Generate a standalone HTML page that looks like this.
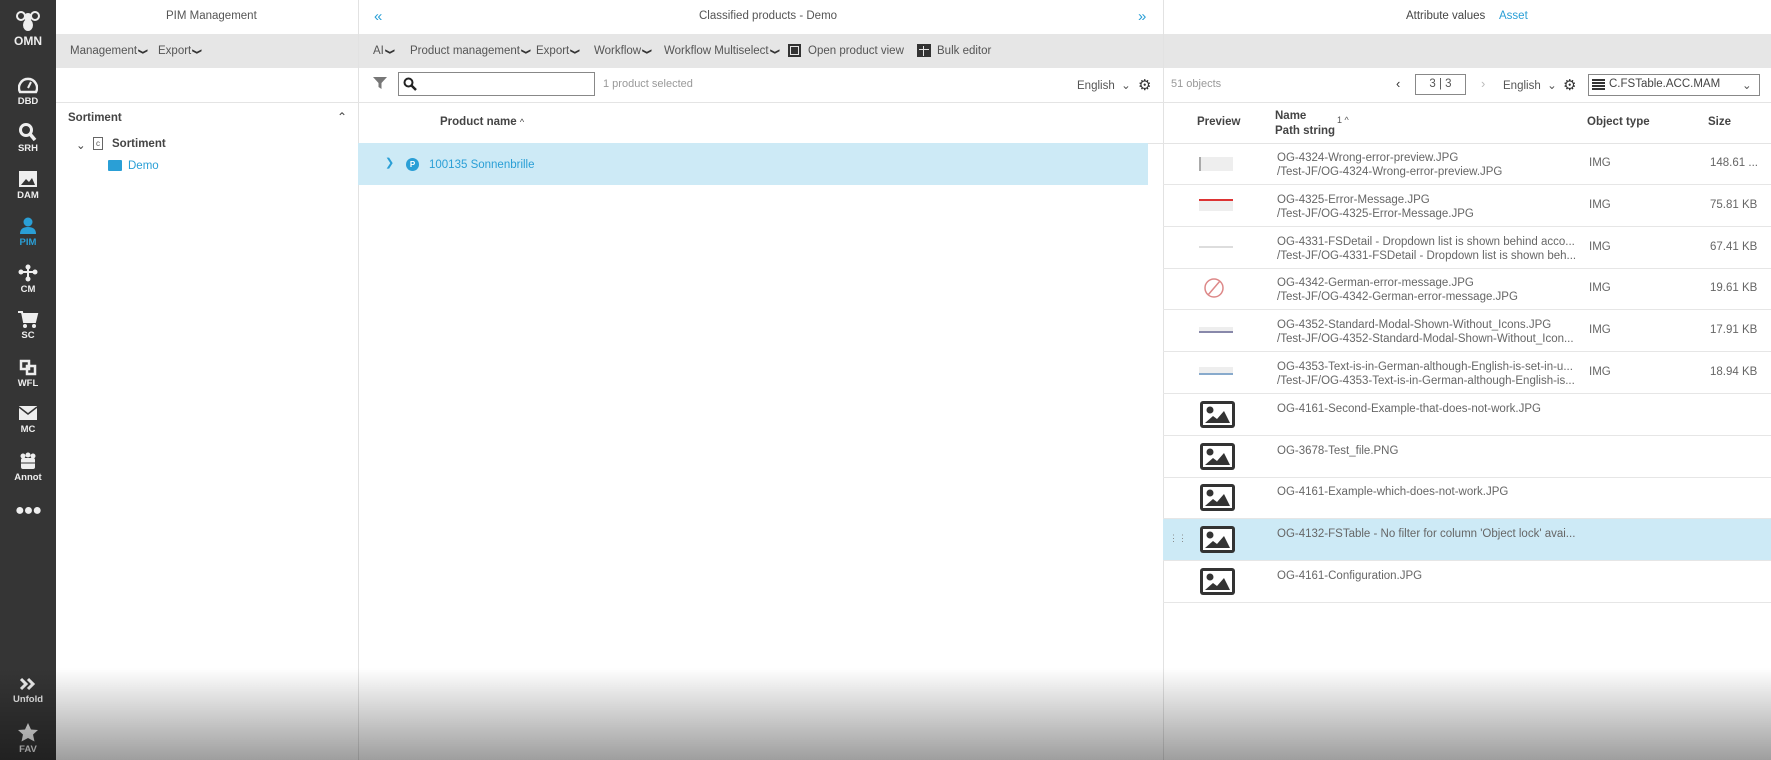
<!DOCTYPE html>
<html><head><meta charset="utf-8"><style>
*{margin:0;padding:0;box-sizing:border-box}
body{width:1771px;height:760px;overflow:hidden;position:relative;background:#fff;font-family:"Liberation Sans",sans-serif;font-size:11.5px;color:#555}
.a{position:absolute;white-space:nowrap}
#side{position:absolute;left:0;top:0;width:56px;height:760px;background:#353535}
.si{position:absolute;left:0;width:56px;text-align:center;color:#eee;font-size:9.5px;font-weight:bold}
.si svg{display:block;margin:0 auto 2px}
.bar{position:absolute;left:56px;top:34px;width:1715px;height:34px;background:#e6e6e6}
.vl{position:absolute;top:0;width:1px;height:760px;background:#e2e2e2}
.hl{position:absolute;height:1px;background:#e4e4e4}
.blue{color:#2a9fd6}
.b{font-weight:bold;color:#444}
.cv{display:inline-block;transform:rotate(90deg) scaleX(.8);font-size:9px;font-weight:bold;color:#333;margin-left:2px}
.row{position:absolute;left:1163px;width:608px;height:42px;border-bottom:1px solid #e6e6e6;color:#666}
.row .n{position:absolute;left:114px;top:8px;line-height:14px}
.row .t{position:absolute;left:426px;top:14px}
.row .s{position:absolute;left:547px;top:14px}
</style></head><body>
<div id="side">
 <div class="si" style="top:10px;font-size:12px"><svg width="26" height="22" viewBox="0 0 26 22"><circle cx="13" cy="7" r="4" fill="#eee"/><ellipse cx="13" cy="15" rx="5" ry="6" fill="#eee"/><circle cx="6" cy="6" r="4" fill="none" stroke="#eee" stroke-width="2"/><circle cx="20" cy="6" r="4" fill="none" stroke="#eee" stroke-width="2"/></svg>OMN</div>
 <div class="si" style="top:76px"><svg width="20" height="18" viewBox="0 0 20 18"><path d="M2 16A9 9 0 1 1 18 16Z" fill="none" stroke="#eee" stroke-width="2.4"/><path d="M10 12L13 6" stroke="#eee" stroke-width="2"/></svg>DBD</div>
 <div class="si" style="top:123px"><svg width="20" height="18" viewBox="0 0 20 18"><circle cx="8" cy="7" r="5.5" fill="none" stroke="#eee" stroke-width="3"/><path d="M12 11L17 17" stroke="#eee" stroke-width="3.5"/></svg>SRH</div>
 <div class="si" style="top:170px"><svg width="20" height="18" viewBox="0 0 20 18"><rect x="1" y="1" width="18" height="16" fill="#eee"/><path d="M3 15L8 9L11 12L14 8L17 15Z" fill="#353535"/></svg>DAM</div>
 <div class="si" style="top:217px;color:#2a9fd6"><svg width="20" height="18" viewBox="0 0 20 18"><circle cx="10" cy="5" r="4.5" fill="#2a9fd6"/><path d="M2 17Q2 10 10 10Q18 10 18 17Z" fill="#2a9fd6"/></svg>PIM</div>
 <div class="si" style="top:264px"><svg width="20" height="18" viewBox="0 0 20 18"><circle cx="10" cy="3" r="2.5" fill="#eee"/><circle cx="3" cy="8" r="2.5" fill="#eee"/><circle cx="17" cy="8" r="2.5" fill="#eee"/><circle cx="10" cy="15" r="2.5" fill="#eee"/><path d="M10 3V15M3 8H17" stroke="#eee" stroke-width="2"/></svg>CM</div>
 <div class="si" style="top:310px"><svg width="22" height="18" viewBox="0 0 22 18"><path d="M1 2H5L7 12H18L20 4H6" fill="#eee" stroke="#eee" stroke-width="2"/><circle cx="8" cy="16" r="2" fill="#eee"/><circle cx="17" cy="16" r="2" fill="#eee"/></svg>SC</div>
 <div class="si" style="top:358px"><svg width="20" height="18" viewBox="0 0 20 18"><rect x="3" y="3" width="8" height="8" fill="none" stroke="#eee" stroke-width="2.5"/><rect x="9" y="8" width="8" height="8" fill="none" stroke="#eee" stroke-width="2.5"/></svg>WFL</div>
 <div class="si" style="top:404px"><svg width="20" height="18" viewBox="0 0 20 18"><rect x="1" y="2" width="18" height="14" fill="#eee"/><path d="M1 3L10 10L19 3" fill="none" stroke="#353535" stroke-width="1.5"/></svg>MC</div>
 <div class="si" style="top:452px"><svg width="20" height="18" viewBox="0 0 20 18"><circle cx="5" cy="4" r="2.5" fill="#eee"/><circle cx="10" cy="3" r="2.5" fill="#eee"/><circle cx="15" cy="4" r="2.5" fill="#eee"/><rect x="3" y="6" width="14" height="11" rx="2" fill="#eee"/><path d="M3 11H17" stroke="#353535"/></svg>Annot</div>
 <div class="si" style="top:502px;font-size:16px;letter-spacing:-1px">●●●</div>
 <div class="si" style="top:676px"><svg width="20" height="16" viewBox="0 0 20 16"><path d="M3 3L8 8L3 13M10 3L15 8L10 13" fill="none" stroke="#eee" stroke-width="3"/></svg>Unfold</div>
 <div class="si" style="top:722px"><svg width="22" height="20" viewBox="0 0 22 20"><path d="M11 1L14 7.5L21 8L16 12.5L17.5 19.5L11 16L4.5 19.5L6 12.5L1 8L8 7.5Z" fill="#eee"/></svg>FAV</div>
</div>

<div class="bar"></div>
<div class="vl" style="left:358px"></div>
<div class="vl" style="left:1163px"></div>
<div class="hl" style="left:56px;top:102px;width:1715px"></div>
<div class="hl" style="left:358px;top:143px;width:1413px"></div>

<div class="a" style="left:166px;top:10px;color:#555">PIM Management</div>
<div class="a" style="left:70px;top:45px">Management<span class="cv">&#10095;</span></div>
<div class="a" style="left:158px;top:45px">Export<span class="cv">&#10095;</span></div>
<div class="a b" style="left:68px;top:112px">Sortiment</div>
<div class="a" style="left:337px;top:110px;font-size:12px;color:#444">&#8963;</div>
<div class="a" style="left:76px;top:138px;color:#444">&#8964;</div>
<div class="a" style="left:93px;top:137px;width:10px;height:13px;border:1px solid #666;font-size:8px;text-align:center;line-height:11px">c</div>
<div class="a b" style="left:112px;top:138px">Sortiment</div>
<div class="a" style="left:108px;top:160px;width:14px;height:11px;background:#2a9fd6;border-radius:1px"></div>
<div class="a blue" style="left:128px;top:160px">Demo</div>

<div class="a blue" style="left:374px;top:8px;font-size:15px">&laquo;</div>
<div class="a" style="left:699px;top:10px">Classified products - Demo</div>
<div class="a blue" style="left:1138px;top:8px;font-size:15px">&raquo;</div>
<div class="a" style="left:373px;top:45px">AI<span class="cv">&#10095;</span></div>
<div class="a" style="left:410px;top:45px">Product management<span class="cv">&#10095;</span></div>
<div class="a" style="left:536px;top:45px">Export<span class="cv">&#10095;</span></div>
<div class="a" style="left:594px;top:45px">Workflow<span class="cv">&#10095;</span></div>
<div class="a" style="left:664px;top:45px">Workflow Multiselect<span class="cv">&#10095;</span></div>
<div class="a" style="left:788px;top:44px;width:13px;height:13px;background:#333;border:2px solid #333;box-shadow:inset 0 0 0 1px #e6e6e6"></div>
<div class="a" style="left:808px;top:45px">Open product view</div>
<div class="a" style="left:917px;top:44px;width:14px;height:13px;background:#333"><div style="position:absolute;left:2px;top:5px;width:10px;height:1px;background:#e6e6e6"></div><div style="position:absolute;left:6px;top:2px;width:1px;height:10px;background:#e6e6e6"></div></div>
<div class="a" style="left:937px;top:45px">Bulk editor</div>
<svg class="a" style="left:373px;top:76px" width="14" height="14" viewBox="0 0 14 14"><path d="M0 1H14L8.5 7V13L5.5 11V7Z" fill="#777"/></svg>
<div class="a" style="left:398px;top:72px;width:197px;height:24px;border:1px solid #888"></div>
<svg class="a" style="left:403px;top:77px" width="14" height="14" viewBox="0 0 14 14"><circle cx="5.5" cy="5.5" r="4" fill="none" stroke="#222" stroke-width="2"/><path d="M8.5 8.5L13 13" stroke="#222" stroke-width="2.5"/></svg>
<div class="a" style="left:603px;top:78px;color:#999;font-size:11px">1 product selected</div>
<div class="a" style="left:1077px;top:78px">English &nbsp;&#8964;</div>
<div class="a" style="left:1138px;top:76px;font-size:15px;color:#333">&#9881;</div>
<div class="a b" style="left:440px;top:116px">Product name <span style="font-weight:normal;font-size:9px">^</span></div>
<div class="a" style="left:358px;top:143px;width:790px;height:42px;background:#cdeaf6"></div>
<div class="a blue" style="left:385px;top:156px;font-size:11px">&#10095;</div>
<div class="a" style="left:406px;top:158px;width:13px;height:13px;border-radius:50%;background:#2a9fd6;color:#fff;font-size:8px;font-weight:bold;text-align:center;line-height:13px">P</div>
<div class="a blue" style="left:429px;top:159px">100135 Sonnenbrille</div>

<div class="a" style="left:1406px;top:10px;color:#444">Attribute values</div>
<div class="a blue" style="left:1499px;top:10px">Asset</div>
<div class="a" style="left:1171px;top:78px;color:#999;font-size:11px">51 objects</div>
<div class="a" style="left:1396px;top:76px;color:#333;font-size:13px">&#8249;</div>
<div class="a" style="left:1415px;top:74px;width:51px;height:21px;border:1px solid #888;text-align:center;line-height:19px">3 | 3</div>
<div class="a" style="left:1481px;top:76px;color:#bbb;font-size:13px">&#8250;</div>
<div class="a" style="left:1503px;top:78px">English &nbsp;&#8964;</div>
<div class="a" style="left:1563px;top:76px;font-size:15px;color:#333">&#9881;</div>
<div class="a" style="left:1588px;top:74px;width:172px;height:22px;border:1px solid #888"></div>
<div class="a" style="left:1592px;top:79px;width:13px;height:12px;background:repeating-linear-gradient(#333 0 2px,#fff 2px 3px)"></div>
<div class="a" style="left:1609px;top:78px;color:#444">C.FSTable.ACC.MAM</div>
<div class="a" style="left:1742px;top:78px">&#8964;</div>
<div class="a b" style="left:1197px;top:116px">Preview</div>
<div class="a b" style="left:1275px;top:109px;line-height:15px">Name<br>Path string</div>
<div class="a" style="left:1337px;top:115px;font-size:9px">1 ^</div>
<div class="a b" style="left:1587px;top:116px">Object type</div>
<div class="a b" style="left:1708px;top:116px">Size</div>

<div class="row" style="top:143px"><div class="a" style="left:36px;top:14px;width:34px;height:14px;background:#eee;border-left:2px solid #aaa"></div><div class="n">OG-4324-Wrong-error-preview.JPG<br>/Test-JF/OG-4324-Wrong-error-preview.JPG</div><div class="t">IMG</div><div class="s">148.61 ...</div></div>
<div class="row" style="top:185px"><div class="a" style="left:36px;top:14px;width:34px;height:12px;background:#eee;border-top:2px solid #d33"></div><div class="n">OG-4325-Error-Message.JPG<br>/Test-JF/OG-4325-Error-Message.JPG</div><div class="t">IMG</div><div class="s">75.81 KB</div></div>
<div class="row" style="top:227px"><div class="a" style="left:36px;top:19px;width:34px;height:2px;background:#ddd"></div><div class="n">OG-4331-FSDetail - Dropdown list is shown behind acco...<br>/Test-JF/OG-4331-FSDetail - Dropdown list is shown beh...</div><div class="t">IMG</div><div class="s">67.41 KB</div></div>
<div class="row" style="top:268px"><svg class="a" style="left:38px;top:8px" width="30" height="26"><circle cx="13" cy="12" r="9" fill="none" stroke="#d88" stroke-width="1.5"/><path d="M7 19L19 5" stroke="#d88" stroke-width="1.5"/></svg><div class="n">OG-4342-German-error-message.JPG<br>/Test-JF/OG-4342-German-error-message.JPG</div><div class="t">IMG</div><div class="s">19.61 KB</div></div>
<div class="row" style="top:310px"><div class="a" style="left:36px;top:17px;width:34px;height:6px;background:#eee;border-bottom:2px solid #88a"></div><div class="n">OG-4352-Standard-Modal-Shown-Without_Icons.JPG<br>/Test-JF/OG-4352-Standard-Modal-Shown-Without_Icon...</div><div class="t">IMG</div><div class="s">17.91 KB</div></div>
<div class="row" style="top:352px"><div class="a" style="left:36px;top:15px;width:34px;height:8px;background:#eee;border-bottom:2px solid #8ac"></div><div class="n">OG-4353-Text-is-in-German-although-English-is-set-in-u...<br>/Test-JF/OG-4353-Text-is-in-German-although-English-is...</div><div class="t">IMG</div><div class="s">18.94 KB</div></div>

<svg width="0" height="0" style="position:absolute"><defs><symbol id="im" viewBox="0 0 35 27"><rect width="35" height="27" rx="3" fill="#333"/><rect x="3" y="3" width="29" height="21" fill="#fff"/><circle cx="10" cy="9" r="3.5" fill="#333"/><path d="M5 22L13 15L17 18L24 10L30 22Z" fill="#333"/></symbol></defs></svg>
<div class="row" style="top:394px"><svg class="a" style="left:37px;top:7px" width="35" height="27"><use href="#im"/></svg><div class="n">OG-4161-Second-Example-that-does-not-work.JPG</div></div>
<div class="row" style="top:436px"><svg class="a" style="left:37px;top:7px" width="35" height="27"><use href="#im"/></svg><div class="n">OG-3678-Test_file.PNG</div></div>
<div class="row" style="top:477px"><svg class="a" style="left:37px;top:7px" width="35" height="27"><use href="#im"/></svg><div class="n">OG-4161-Example-which-does-not-work.JPG</div></div>
<div class="row" style="top:519px;background:#cdeaf6"><div class="a" style="left:6px;top:14px;font-size:9px;color:#888">&#8942;&#8942;</div><svg class="a" style="left:37px;top:7px" width="35" height="27"><use href="#im"/></svg><div class="n">OG-4132-FSTable - No filter for column 'Object lock' avai...</div></div>
<div class="row" style="top:561px"><svg class="a" style="left:37px;top:7px" width="35" height="27"><use href="#im"/></svg><div class="n">OG-4161-Configuration.JPG</div></div>

<div style="position:absolute;left:0;top:668px;width:1771px;height:92px;background:linear-gradient(rgba(0,0,0,0),rgba(0,0,0,0.38));pointer-events:none"></div>
</body></html>
